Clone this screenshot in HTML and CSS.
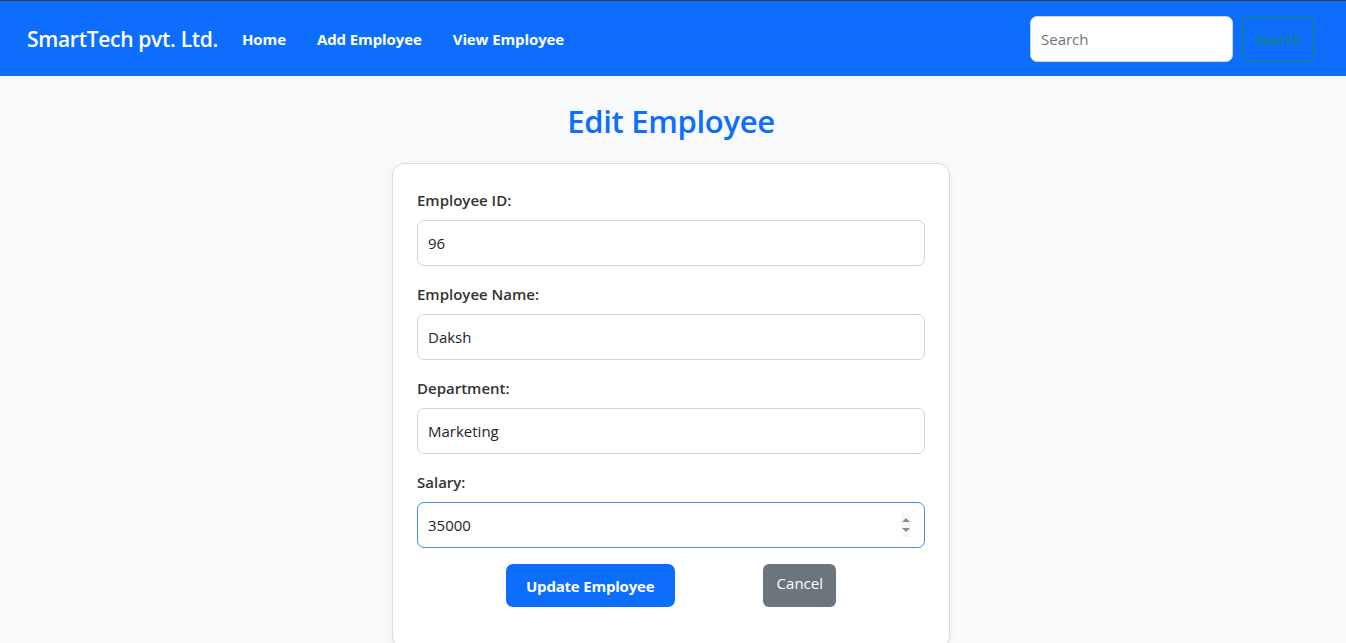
FILE: index.html
```html
<!DOCTYPE html>
<html lang="en">
<head>
<meta charset="utf-8">
<title>Edit Employee</title>
<link rel="stylesheet" href="styles.css">
</head>
<body>
<nav class="navbar">
  <div class="nav-left">
    <a class="brand" href="#">SmartTech pvt. Ltd.</a>
    <ul class="nav-links">
      <li><a href="#">Home</a></li>
      <li><a href="#">Add Employee</a></li>
      <li><a href="#">View Employee</a></li>
    </ul>
  </div>
  <form class="search">
    <input class="search-input" type="text" placeholder="Search">
    <button class="search-btn" type="button">Search</button>
  </form>
</nav>
<main class="page">
  <h2 class="title">Edit Employee</h2>
  <form class="card">
    <div class="field">
      <label>Employee ID:</label>
      <input class="control" type="text" value="96">
    </div>
    <div class="field">
      <label>Employee Name:</label>
      <input class="control" type="text" value="Daksh">
    </div>
    <div class="field">
      <label>Department:</label>
      <input class="control" type="text" value="Marketing">
    </div>
    <div class="field">
      <label>Salary:</label>
      <div class="control focused number">
        <span>35000</span>
        <span class="spinner">
          <svg width="10" height="22" viewBox="0 0 10 22"><path d="M1 8 L5 4 L9 8 Z" fill="#8a8a8a"/><path d="M1 14 L5 18 L9 14 Z" fill="#8a8a8a"/></svg>
        </span>
      </div>
    </div>
    <div class="actions">
      <button class="btn-primary" type="button">Update Employee</button>
      <a class="btn-secondary" href="#">Cancel</a>
    </div>
  </form>
</main>
</body>
</html>
```
FILE: styles.css
```css
* { box-sizing: border-box; }
html, body { margin: 0; padding: 0; }
body {
  font-family: "Open Sans", "Noto Sans", sans-serif;
  background: #f8f9fa;
  color: #212529;
  border-top: 1px solid #3a3a3a;
  height: 643px;
  overflow: hidden;
}
.navbar {
  background: #0d6efd;
  height: 75px;
  display: flex;
  align-items: center;
  justify-content: space-between;
  padding: 0 32px 0 27px;
}
.nav-left { display: flex; align-items: center; }
.brand {
  color: #fff;
  text-decoration: none;
  font-size: 21px;
  font-weight: 600;
  letter-spacing: -0.3px;
  margin-right: 16px;
}
.nav-links { display: flex; list-style: none; margin: 0; padding: 0; }
.nav-links a {
  display: block;
  color: #fff;
  text-decoration: none;
  font-size: 15px;
  font-weight: 700;
  padding: 8px 8px;
  margin-right: 15px;
  letter-spacing: -0.1px;
}
.search { display: flex; align-items: center; gap: 9px; }
.search-input {
  width: 203px;
  height: 46px;
  border: 1px solid #ced4da;
  border-radius: 7px;
  padding: 0 10px;
  font-family: inherit;
  font-size: 15px;
  color: #212529;
}
.search-input::placeholder { color: #6c757d; }
.search-btn {
  height: 46px;
  width: 72px;
  background: transparent;
  border: 1px solid #198754;
  border-radius: 6px;
  color: #198754;
  font-family: inherit;
  font-size: 15px;
  padding: 0;
}
.page {
  display: flex;
  flex-direction: column;
  align-items: center;
  padding-right: 4px;
}
.title {
  margin: 23px 0 20px;
  color: #0d6efd;
  font-size: 31px;
  font-weight: 600;
  line-height: 44px;
  letter-spacing: -0.3px;
}
.card {
  width: 558px;
  background: #fff;
  border: 1px solid #d9dcdf;
  border-radius: 12px;
  box-shadow: 0 2px 6px rgba(0,0,0,0.06);
  padding: 24px 24px 40px;
}
.field { margin-bottom: 16px; }
.field label {
  display: block;
  font-size: 15px;
  font-weight: 600;
  color: #333;
  line-height: 24px;
  margin-bottom: 8px;
}
.control {
  display: flex;
  align-items: center;
  width: 100%;
  height: 46px;
  border: 1px solid #ced4da;
  border-radius: 7px;
  padding: 0 10px;
  font-family: inherit;
  font-size: 15px;
  color: #212529;
  background: #fff;
}
.focused { border-color: #3d8bfd; }
.number { justify-content: space-between; padding-right: 13px; }
.spinner { display: flex; background: #f7f7f7; height: 24px; align-items: center; }
.actions {
  display: flex;
  justify-content: space-evenly;
  align-items: flex-start;
}
.btn-primary {
  height: 43px;
  width: 169px;
  background: #0d6efd;
  color: #fff;
  border: none;
  border-radius: 7px;
  font-family: inherit;
  font-size: 15px;
  font-weight: 700;
  letter-spacing: -0.2px;
}
.btn-secondary {
  display: block;
  height: 43px;
  width: 73px;
  background: #6c757d;
  color: #fff;
  border-radius: 6px;
  text-decoration: none;
  text-align: center;
  font-size: 15px;
  padding-top: 9px;
  line-height: 20px;
}
```
